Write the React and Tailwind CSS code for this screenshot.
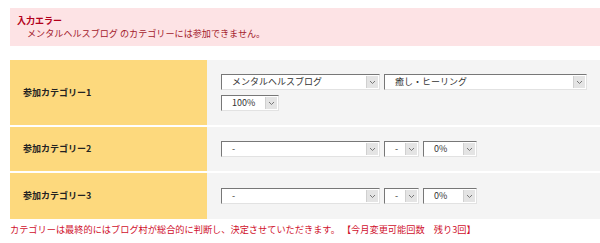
const font = { fontFamily: '"Noto Sans CJK JP", "Noto Sans", sans-serif' }

const Chevron = () => (
    <svg width="7" height="5" viewBox="0 0 7 5" fill="none">
        <path d="M1 1l2.5 2.5L6 1" stroke="#777" strokeWidth="1" />
    </svg>
)

function FakeSelect({ value, width }) {
    return (
        <div
            className={`flex h-[16px] items-stretch bg-white border border-t-[#777] border-l-[#777] border-b-[#e2e2e2] border-r-[#e2e2e2] ${width}`}
        >
            <span className="flex-1 pl-[10px] text-[9px] leading-[14px] text-[#333] whitespace-nowrap overflow-hidden">
                {value}
            </span>
            <span className="flex w-[12px] items-center justify-center bg-[#e4e4e4] border-l border-[#d0d0d0] my-[1px] mr-[1px]">
                <Chevron />
            </span>
        </div>
    )
}

const rows = [
    { label: '参加カテゴリー1', h: 'h-[65px]' },
    { label: '参加カテゴリー2', h: 'h-[44px]' },
    { label: '参加カテゴリー3', h: 'h-[46px]' },
]

export default function App() {
    return (
        <div className="w-[600px] h-[243px] bg-white overflow-hidden" style={font}>
            {/* Error */}
            <div className="ml-[10px] mt-[8px] h-[38px] bg-[#fde3e5] pl-[7px] pt-[7px]">
                <p className="text-[9px] leading-[12px] font-bold text-[#b3001b]">入力エラー</p>
                <p className="pl-[10px] text-[9.1px] leading-[13px] text-[#a3202c]">
                    メンタルヘルスブログ のカテゴリーには参加できません。
                </p>
            </div>

            {/* Table */}
            <div className="ml-[10px] mt-[14px] flex flex-col gap-[2px]">
                {rows.map((row, i) => (
                    <div key={row.label} className={`flex ${row.h}`}>
                        <div className="w-[197px] flex items-center bg-[#fdd97d] pl-[13px] text-[9px] font-bold text-[#222]">
                            {row.label}
                        </div>
                        <div className="flex-1 flex flex-col justify-center gap-[5px] bg-[#f4f4f4] pl-[14px]">
                            {i === 0 ? (
                                <>
                                    <div className="flex gap-[4px]">
                                        <FakeSelect value="メンタルヘルスブログ" width="w-[159px]" />
                                        <FakeSelect value="癒し・ヒーリング" width="w-[203px]" />
                                    </div>
                                    <div className="flex">
                                        <FakeSelect value="100%" width="w-[58px]" />
                                    </div>
                                </>
                            ) : (
                                <div className="flex gap-[4px]">
                                    <FakeSelect value="-" width="w-[159px]" />
                                    <FakeSelect value="-" width="w-[35px]" />
                                    <FakeSelect value="0%" width="w-[54px]" />
                                </div>
                            )}
                        </div>
                    </div>
                ))}
            </div>

            {/* Footer note */}
            <p className="ml-[10px] mt-[3px] text-[9.2px] leading-[14px] text-[#d0102c] whitespace-nowrap">
                カテゴリーは最終的にはブログ村が総合的に判断し、決定させていただきます。 【今月変更可能回数　残り3回】
            </p>
        </div>
    )
}
